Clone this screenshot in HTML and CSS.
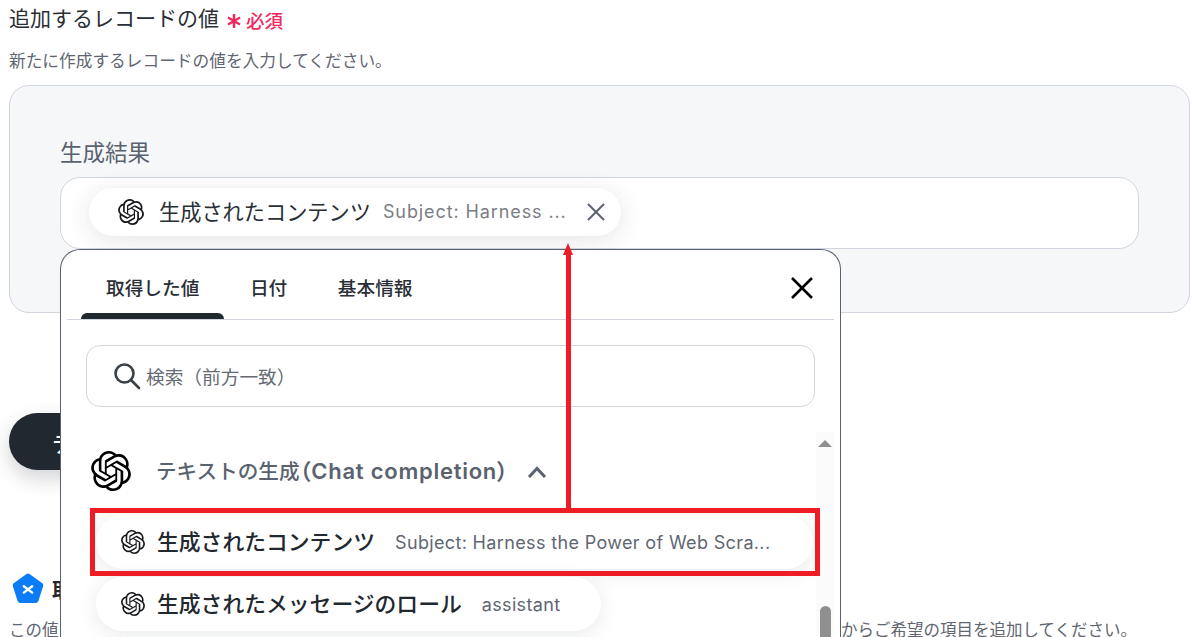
FILE: index.html
```html
<!DOCTYPE html>
<html lang="ja">
<head>
<meta charset="utf-8">
<title>追加するレコードの値</title>
<link rel="stylesheet" href="styles.css">
</head>
<body>
<svg class="defs" aria-hidden="true"><symbol id="oai" viewBox="0 0 24 24"><path d="M22.2819 9.8211a5.9847 5.9847 0 0 0-.5157-4.9108 6.0462 6.0462 0 0 0-6.5098-2.9A6.0651 6.0651 0 0 0 4.9807 4.1818a5.9847 5.9847 0 0 0-3.9977 2.9 6.0462 6.0462 0 0 0 .7427 7.0966 5.98 5.98 0 0 0 .511 4.9107 6.051 6.051 0 0 0 6.5146 2.9001A5.9847 5.9847 0 0 0 13.2599 24a6.0557 6.0557 0 0 0 5.7718-4.2058 5.9894 5.9894 0 0 0 3.9977-2.9001 6.0557 6.0557 0 0 0-.7475-7.0729zm-9.022 12.6081a4.4755 4.4755 0 0 1-2.8764-1.0408l.1419-.0804 4.7783-2.7582a.7948.7948 0 0 0 .3927-.6813v-6.7369l2.02 1.1686a.071.071 0 0 1 .038.052v5.5826a4.504 4.504 0 0 1-4.4945 4.4944zm-9.6607-4.1254a4.4708 4.4708 0 0 1-.5346-3.0137l.142.0852 4.783 2.7582a.7712.7712 0 0 0 .7806 0l5.8428-3.3685v2.3324a.0804.0804 0 0 1-.0332.0615L9.74 19.9502a4.4992 4.4992 0 0 1-6.1408-1.6464zM2.3408 7.8956a4.485 4.485 0 0 1 2.3655-1.9728V11.6a.7664.7664 0 0 0 .3879.6765l5.8144 3.3543-2.0201 1.1685a.0757.0757 0 0 1-.071 0l-4.8303-2.7865A4.504 4.504 0 0 1 2.3408 7.872zm16.5963 3.8558L13.1038 8.364 15.1192 7.2a.0757.0757 0 0 1 .071 0l4.8303 2.7913a4.4944 4.4944 0 0 1-.6765 8.1042v-5.6772a.79.79 0 0 0-.407-.667zm2.0107-3.0231l-.142-.0852-4.7735-2.7818a.7759.7759 0 0 0-.7854 0L9.409 9.2297V6.8974a.0662.0662 0 0 1 .0284-.0615l4.8303-2.7866a4.4992 4.4992 0 0 1 6.6802 4.66zM8.3065 12.863l-2.02-1.1638a.0804.0804 0 0 1-.038-.0567V6.0742a4.4992 4.4992 0 0 1 7.3757-3.4537l-.142.0805L8.704 5.459a.7948.7948 0 0 0-.3927.6813zm1.0976-2.3654l2.602-1.4998 2.6069 1.4998v2.9994l-2.5974 1.4997-2.6067-1.4997Z"/></symbol></svg>

<main class="page">
  <header class="head">
    <h1 class="title">追加するレコードの値</h1>
    <span class="req"><svg class="ast" viewBox="0 0 16 16"><path d="M8 1v14M2 4.500l12 7M14 4.500l-12 7"/></svg>必須</span>
  </header>
  <p class="desc">新たに作成するレコードの値を入力してください。</p>

  <section class="panel">
    <div class="label">生成結果</div>
    <div class="input">
      <div class="chip">
        <svg class="ic26"><use href="#oai"/></svg>
        <span class="chip-name">生成されたコンテンツ</span>
        <span class="chip-val">Subject: Harness ...</span>
        <svg class="chip-x" viewBox="0 0 20 20"><path d="M2 2l16 16M18 2L2 18"/></svg>
      </div>
    </div>
  </section>

  <button class="run">テスト</button>

  <div class="got">
    <svg class="penta" viewBox="0 0 32 32"><path d="M14.200 1.200a3 3 0 0 1 3.600 0l12.200 8.700a3 3 0 0 1 1.100 3.400l-4.700 14.600a3 3 0 0 1-2.900 2.100H8.500a3 3 0 0 1-2.900-2.100L.9 13.300a3 3 0 0 1 1.100-3.400z" fill="#0a7cf5"/><path d="M11.800 13.200l8.400 6.400M20.200 13.200l-8.400 6.400" stroke="#fff" stroke-width="2.400" stroke-linecap="round"/></svg>
    <strong class="got-title">取得した値</strong>
  </div>
  <p class="note"><span>この値を利用するには</span><span>からご希望の項目を追加してください。</span></p>
</main>

<aside class="pop">
  <div class="tabs">
    <span class="tab on">取得した値</span>
    <span class="tab">日付</span>
    <span class="tab">基本情報</span>
    <svg class="pop-x" viewBox="0 0 24 24"><path d="M2 2l20 20M22 2L2 22"/></svg>
  </div>
  <div class="search">
    <svg class="mag" viewBox="0 0 28 28"><circle cx="11.500" cy="11.500" r="9"/><path d="M18 18l8 8"/></svg>
    <span>検索（前方一致）</span>
  </div>
  <div class="scrollarea">
    <div class="list">
      <div class="group">
        <svg class="ic40"><use href="#oai"/></svg>
        <span class="group-name">テキストの生成<span class="lat">（Chat completion）</span></span>
        <svg class="chev" viewBox="0 0 20 14"><path d="M2 12l8-8.500 8 8.500"/></svg>
      </div>
      <div class="item wide">
        <svg class="ic24"><use href="#oai"/></svg>
        <span class="item-name">生成されたコンテンツ</span>
        <span class="item-val">Subject: Harness the Power of Web Scra...</span>
      </div>
      <div class="item">
        <svg class="ic24"><use href="#oai"/></svg>
        <span class="item-name">生成されたメッセージのロール</span>
        <span class="item-val">assistant</span>
      </div>
    </div>
    <div class="scrollbar">
      <i class="sb-up"></i>
      <i class="sb-thumb"></i>
    </div>
  </div>
</aside>

<div class="mark-box"></div>
<div class="mark-line"></div>
<div class="mark-head"></div>
</body>
</html>
```
FILE: styles.css
```css
* { box-sizing: border-box; }
html, body { margin: 0; height: 637px; overflow: hidden; background: #fff; }
body { font-family: Inter, "Noto Sans CJK JP", sans-serif; color: #22282f; position: relative; }
.defs { position: absolute; width: 0; height: 0; }

.page { height: 637px; overflow: hidden; padding: 0 5px 0 9px; }
.head { display: flex; align-items: center; height: 38px; }
.title { margin: 0; font-size: 21px; font-weight: 400; line-height: 38px; color: #2a2f36; }
.req { display: inline-flex; align-items: center; margin: 1px 0 0 7px; font-size: 18.500px; color: #f0285f; font-weight: 500; }
.ast { width: 16px; height: 16px; margin: 2px 4px 0 0; fill: none; stroke: #f0285f; stroke-width: 2.400; }
.desc { margin: 11px 0 0; font-size: 16.700px; line-height: 24px; color: #5f6672; }

.panel { margin-top: 12px; height: 228px; background: #f6f7f9; border: 1px solid #d0d5e0; border-radius: 20px; padding: 50px 50px 0; }
.label { font-size: 22.500px; line-height: 34px; color: #5a6270; }
.input { margin-top: 7px; height: 72px; background: #fff; border: 1px solid #d0d5e0; border-radius: 20px; padding: 10px 28px; }
.chip { display: flex; align-items: center; width: 532px; height: 48px; background: #fff; border-radius: 24px; padding-left: 29px; box-shadow: 0 4px 24px rgba(40, 45, 60, .12); }
.ic26 { width: 26px; height: 26px; flex: none; fill: #17191c; }
.ic24 { width: 24px; height: 24px; flex: none; fill: #17191c; }
.chip-name { margin: 0 0 3px 15px; font-size: 21.200px; white-space: nowrap; color: #2a2f36; }
.chip-val { margin: 0 0 1px 12px; font-size: 18px; letter-spacing: .9px; white-space: nowrap; color: #7b7e84; }
.chip-x { width: 20px; height: 20px; margin-left: 19px; fill: none; stroke: #5a6270; stroke-width: 2; }

.run { display: block; margin-top: 100px; width: 300px; height: 57px; border: 0; border-radius: 29px; background: #22282f; color: #fff; font: 500 22px Inter, "Noto Sans CJK JP", sans-serif; text-align: left; padding: 0 0 0 43px; box-shadow: 0 8px 20px rgba(30, 35, 45, .2); }

.got { display: flex; align-items: center; margin-top: 103px; margin-left: 3px; }
.penta { width: 32px; height: 32px; flex: none; }
.got-title { margin-left: 8px; font-size: 20px; font-weight: 700; white-space: nowrap; }
.note { display: flex; justify-content: space-between; margin: 18px 0 0; padding-right: 53px; font-size: 16.500px; line-height: 14px; color: #5f6672; }

.pop { position: absolute; left: 60px; top: 249px; width: 781px; height: 388px; overflow: hidden; background: #fff; border: 1px solid #5a6070; border-bottom: 0; border-radius: 20px 20px 0 0; padding: 0 6px; }
.tabs { position: relative; display: flex; align-items: flex-start; gap: 50.500px; height: 70px; padding: 27px 0 0 39px; border-bottom: 1px solid #d0d5e0; }
.tab { position: relative; font-size: 18.700px; font-weight: 500; line-height: 24px; color: #2a2f36; }
.tab.on::after { content: ""; position: absolute; left: -25px; right: -25px; top: 36px; height: 6px; background: #22282f; border-radius: 6px 6px 0 0; }
.pop-x { position: absolute; right: 20px; top: 26px; width: 24px; height: 24px; fill: none; stroke: #000; stroke-width: 2.600; }
.search { display: flex; align-items: center; margin: 25px 19px 0 19px; height: 62px; border: 1px solid #d0d5e0; border-radius: 14px; padding: 0 0 2px 26px; font-size: 18.700px; color: #666b73; }
.mag { width: 28px; height: 28px; margin: 2px 5px 0 0; fill: none; stroke: #3a4048; stroke-width: 2.600; stroke-linecap: round; }

.scrollarea { display: flex; margin-top: 25px; }
.list { flex: 1; min-width: 0; padding: 19px 0 0 24px; }
.group { display: flex; align-items: center; height: 40px; }
.ic40 { width: 40px; height: 40px; flex: none; fill: #000; }
.group-name { margin: 0 0 4px 25px; font-size: 20.600px; font-weight: 500; color: #5a6270; white-space: nowrap; }
.lat { font-size: 22px; letter-spacing: .75px; font-weight: 600; font-feature-settings: "palt"; }
.chev { width: 20px; height: 14px; margin: 2px 0 0 18px; fill: none; stroke: #5a6270; stroke-width: 3; }
.item { display: flex; align-items: center; width: 505px; height: 54px; margin: 24px 0 0 5px; padding-left: 25px; border-radius: 27px; background: #fff; box-shadow: 0 4px 20px rgba(40, 45, 60, .1); }
.item + .item { margin-top: 8px; }
.item.wide { width: 717px; }
.item-name { margin: 0 0 4px 12px; font-size: 21.800px; font-weight: 500; white-space: nowrap; color: #22282f; }
.item-val { margin-left: 20px; font-size: 18px; letter-spacing: .35px; white-space: nowrap; color: #5f6672; }

.scrollbar { position: relative; flex: none; width: 18px; height: 300px; background: #fbfbfb; }
.sb-up { position: absolute; left: 2px; top: 8px; width: 0; height: 0; border-left: 7px solid transparent; border-right: 7px solid transparent; border-bottom: 7px solid #8f8f8f; }
.sb-thumb { position: absolute; left: 4px; top: 174px; width: 11px; height: 100px; background: #8f8f8f; border-radius: 6px; }

.mark-box { position: absolute; left: 90px; top: 508px; width: 730px; height: 68px; border: 5px solid #ee1c25; }
.mark-line { position: absolute; left: 566px; top: 250px; width: 5px; height: 260px; background: #ee1c25; }
.mark-head { position: absolute; left: 563px; top: 243px; width: 0; height: 0; border-left: 5.500px solid transparent; border-right: 5.500px solid transparent; border-bottom: 12px solid #ee1c25; }
```
